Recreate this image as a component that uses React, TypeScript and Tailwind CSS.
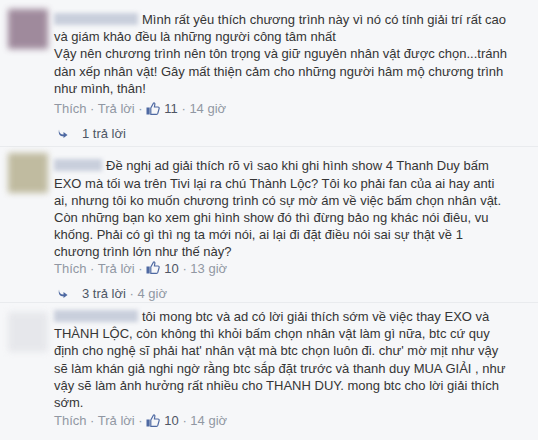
import React from 'react';

type Comment = {
  avatar: string;
  nameWidth: number;
  lines: string[];
  likes: number;
  time: string;
  replies?: string;
  wrap: string;
  actionGap: string;
};

const comments: Comment[] = [
  {
    avatar: 'bg-[#8a6f86] mt-[-2px]',
    nameWidth: 84,
    lines: [
      'Mình rất yêu thích chương trình này vì nó có tính giải trí rất cao',
      'và giám khảo đều là những người công tâm nhất',
      'Vậy nên chương trình nên tôn trọng và giữ nguyên nhân vật được chọn...tránh',
      'dàn xếp nhân vật! Gây mất thiện cảm cho những người hâm mộ chương trình',
      'như mình, thân!',
    ],
    likes: 11,
    time: '14 giờ',
    replies: '1 trả lời',
    wrap: 'pt-[11px] pb-[4px]',
    actionGap: 'mt-[3px]',
  },
  {
    avatar: 'bg-[#b3ad8a] mt-[-4px]',
    nameWidth: 48,
    lines: [
      'Đề nghị ad giải thích rõ vì sao khi ghi hình show 4 Thanh Duy bấm',
      'EXO mà tối wa trên Tivi lại ra chú Thành Lộc? Tôi ko phải fan của ai hay anti',
      'ai, nhưng tôi ko muốn chương trình có sự mờ ám về việc bấm chọn nhân vật.',
      'Còn những bạn ko xem ghi hình show đó thì đừng bảo ng khác nói điêu, vu',
      'khống. Phải có gì thì ng ta mới nói, ai lại đi đặt điều nói sai sự thật về 1',
      'chương trình lớn như thế này?',
    ],
    likes: 10,
    time: '13 giờ',
    replies: '3 trả lời · 4 giờ',
    wrap: 'pt-[10px] pb-[0px] border-t border-[#e9ebee]',
    actionGap: 'mt-[-1px]',
  },
  {
    avatar: 'bg-[#e3e4e8] mt-[4px]',
    nameWidth: 84,
    lines: [
      'tôi mong btc và ad có lời giải thích sớm về việc thay EXO và',
      'THÀNH LỘC, còn không thì khỏi bấm chọn nhân vật làm gì nữa, btc cứ quy',
      "định cho nghệ sĩ phải hat' nhân vật mà btc chọn luôn đi. chư' mờ mịt như vậy",
      'sẽ làm khán giả nghi ngờ rằng btc sắp đặt trước và thanh duy MUA GIẢI , như',
      'vậy sẽ làm ảnh hưởng rất nhiều cho THANH DUY. mong btc cho lời giải thích',
      'sớm.',
    ],
    likes: 10,
    time: '14 giờ',
    wrap: 'pt-[5px] pb-[10px] border-t border-[#e9ebee]',
    actionGap: 'mt-[1px]',
  },
];

const Thumb = () => (
  <svg width="14" height="13" viewBox="0 0 14 13" className="inline-block mr-[4px] -mt-[3px] align-middle">
    <rect x="0.5" y="5.5" width="3.2" height="7" fill="#4e69a2" />
    <path
      d="M4.8 6 L7.4 1.2 C8 0.6 9 1 8.9 2 L8.4 5 L12 5 C12.9 5 13.4 5.8 13.1 6.6 L11.8 11.4 C11.6 12 11.1 12.4 10.5 12.4 L4.8 12.4 Z"
      fill="none"
      stroke="#4e69a2"
      strokeWidth="1.2"
      strokeLinejoin="round"
    />
  </svg>
);

const ReplyArrow = () => (
  <svg width="10" height="9" viewBox="0 0 10 9" className="inline-block">
    <path d="M1 0.5 C1 4 2.5 5.5 5.5 5.5 L5.5 3 L9.5 6 L5.5 9 L5.5 7.3 C2 7.3 0 5.2 1 0.5 Z" fill="#4e69a2" />
  </svg>
);

const CommentItem = ({ c }: { c: Comment }) => {
  const [count, when] = (c.replies ?? '').split(' · ');
  return (
    <div className={`flex px-[8px] ${c.wrap}`}>
      <div className={`w-[40px] h-[40px] shrink-0 ${c.avatar} blur-[3px] opacity-80`} />
      <div className="ml-[6px] text-[13px] leading-[17.2px] text-[#353535]">
        {c.lines.map((l, i) => (
          <div key={i} className="whitespace-nowrap">
            {i === 0 && (
              <span
                className="inline-block h-[12px] mr-[4px] align-[-1px] bg-[#c9cfdc] blur-[2px]"
                style={{ width: c.nameWidth }}
              />
            )}
            {l}
          </div>
        ))}
        <div className={`${c.actionGap} text-[#9197a3] whitespace-nowrap`}>
          Thích · Trả lời · <Thumb />
          <span className="text-[#4e5665]">{c.likes}</span> · {c.time}
        </div>
        {c.replies && (
          <div className="mt-[8px] flex items-center gap-[14px] pl-[4px] whitespace-nowrap text-[#4e5665]">
            <ReplyArrow />
            <span>
              {count}
              {when && <span className="text-[#9197a3]"> · {when}</span>}
            </span>
          </div>
        )}
      </div>
    </div>
  );
};

const App: React.FC = () => {
  return (
    <div
      className="w-[538px] h-[446px] overflow-hidden bg-white"
      style={{ fontFamily: '"Liberation Sans", Arial, sans-serif' }}
    >
      <div className="bg-[#f6f7f9] h-[440px]">
        {comments.map((c, i) => (
          <CommentItem key={i} c={c} />
        ))}
      </div>
    </div>
  );
};

export default App;
